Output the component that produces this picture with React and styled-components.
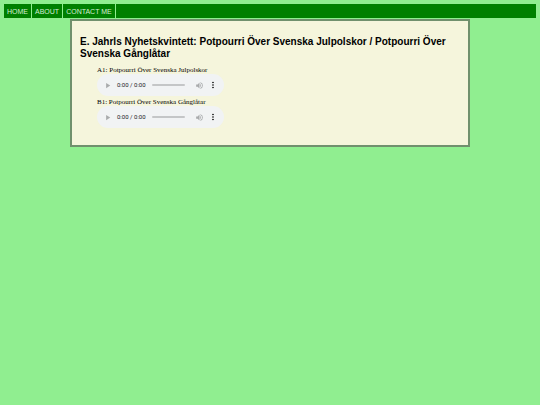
import React from 'react';
import styled, { createGlobalStyle } from 'styled-components';

const GlobalStyle = createGlobalStyle`
  body {
    margin: 0;
    padding: 4px;
    background: lightgreen;
    font-family: "Liberation Serif", "Times New Roman", serif;
    font-size: 7px;
    line-height: 8px;
  }
`;

const Nav = styled.nav`
  background: green;
`;

const NavList = styled.ul`
  display: flex;
  margin: 0;
  padding: 0;
  list-style: none;
`;

const NavLink = styled.a`
  display: block;
  padding: 4px 3px 2px;
  border-right: 1px solid lightgreen;
  color: #d5ecd5;
  font-family: "Liberation Sans", Arial, sans-serif;
  font-size: 7px;
  line-height: 8px;
  text-decoration: none;
`;

const Panel = styled.main`
  margin: 1px 66px 0;
  padding: 15px 8px;
  border: 2px solid #70906d;
  background: beige;
`;

const Title = styled.h1`
  margin: 0 0 6px;
  font-family: "Liberation Sans", Arial, sans-serif;
  font-size: 10px;
  line-height: 12px;
`;

const Tracks = styled.ul`
  margin: 0;
  padding: 0 0 0 17px;
  list-style: none;
`;

const TrackName = styled.div`
  line-height: 8px;
`;

const Player = styled.div`
  display: flex;
  align-items: center;
  box-sizing: border-box;
  width: 127px;
  height: 22px;
  margin-bottom: 2px;
  padding: 0 5px 0 7px;
  border-radius: 11px;
  background: #f1f3f4;
`;

const IconButton = styled.button`
  display: flex;
  align-items: center;
  justify-content: center;
  width: ${({ $width }) => $width}px;
  height: 14px;
  padding: 0;
  border: 0;
  background: none;
  color: ${({ disabled }) => (disabled ? '#a9abac' : '#000')};
`;

const Time = styled.span`
  width: 28px;
  margin: 0 7px 0 5px;
  color: #202124;
  font-family: Roboto, sans-serif;
  font-size: 6px;
  white-space: nowrap;
`;

const Seek = styled.input`
  appearance: none;
  flex: 1;
  min-width: 0;
  height: 2px;
  margin: 0 7px 0 0;
  border-radius: 1px;
  background: #c4c6c7;

  &::-webkit-slider-thumb {
    appearance: none;
    width: 0;
    height: 0;
  }
`;

const links = ['HOME', 'ABOUT', 'CONTACT ME'];

const tracks = [
  'A1: Potpourri Över Svenska Julpolskor',
  'B1: Potpourri Över Svenska Gånglåtar',
];

const AudioPlayer = ({ name }) => {
  return (
    <Player role="group" aria-label={name}>
      <IconButton $width={8} type="button" aria-label="Play" disabled>
        <svg width="8" height="9" viewBox="0 0 20 24" fill="currentColor">
          <path d="M5 5v14l11-7z" />
        </svg>
      </IconButton>
      <Time>0:00 / 0:00</Time>
      <Seek type="range" min="0" max="100" defaultValue="0" aria-label="Seek" disabled />
      <IconButton $width={14} type="button" aria-label="Mute" disabled>
        <svg width="9" height="9" viewBox="0 0 24 24" fill="currentColor">
          <path d="M3 9v6h4l5 5V4L7 9H3zm13.5 3A4.5 4.5 0 0 0 14 7.97v8.05A4.5 4.5 0 0 0 16.5 12zM14 3.23v2.06a7 7 0 0 1 0 13.42v2.06a9 9 0 0 0 0-17.54z" />
        </svg>
      </IconButton>
      <IconButton $width={13} type="button" aria-label="More options">
        <svg width="10" height="10" viewBox="0 0 24 24" fill="currentColor">
          <path d="M12 8a2 2 0 1 0 0-4 2 2 0 0 0 0 4zm0 2a2 2 0 1 0 0 4 2 2 0 0 0 0-4zm0 6a2 2 0 1 0 0 4 2 2 0 0 0 0-4z" />
        </svg>
      </IconButton>
    </Player>
  );
};

const App = () => {
  return (
    <>
      <GlobalStyle />
      <Nav>
        <NavList>
          {links.map((link) => (
            <li key={link}><NavLink href="#">{link}</NavLink></li>
          ))}
        </NavList>
      </Nav>
      <Panel>
        <Title>
          E. Jahrls Nyhetskvintett: Potpourri Över Svenska Julpolskor / Potpourri Över Svenska Gånglåtar
        </Title>
        <Tracks>
          {tracks.map((track) => (
            <li key={track}>
              <TrackName>{track}</TrackName>
              <AudioPlayer name={track} />
            </li>
          ))}
        </Tracks>
      </Panel>
    </>
  );
};

export default App;
